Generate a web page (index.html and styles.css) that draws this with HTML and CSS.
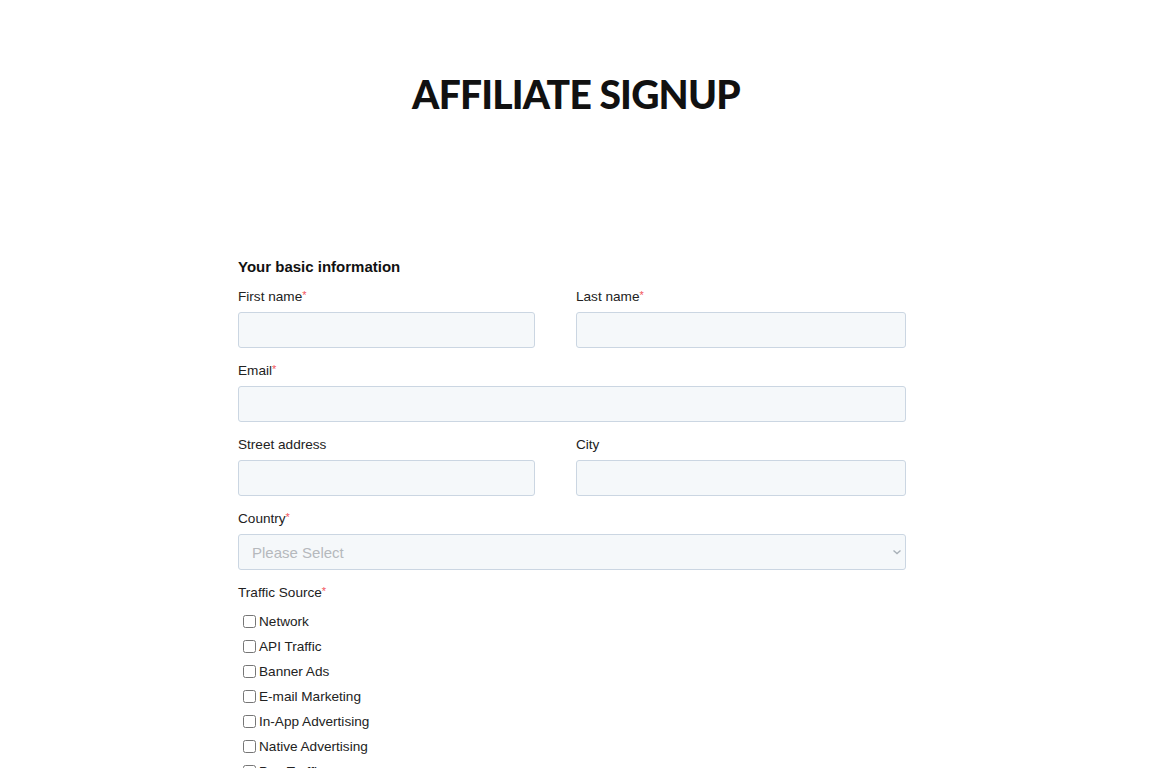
FILE: index.html
```html
<!DOCTYPE html>
<html>
<head>
<meta charset="utf-8">
<link rel="stylesheet" href="styles.css">
</head>
<body>
<header class="hero">
  <h1 class="title">AFFILIATE SIGNUP</h1>
</header>
<main class="wrap">
  <form class="form">
    <h3 class="section">Your basic information</h3>
    <div class="row two">
      <div class="field">
        <label class="lbl">First name<span class="req">*</span></label>
        <input class="inp" type="text">
      </div>
      <div class="field">
        <label class="lbl">Last name<span class="req">*</span></label>
        <input class="inp" type="text">
      </div>
    </div>
    <div class="row">
      <div class="field">
        <label class="lbl">Email<span class="req">*</span></label>
        <input class="inp" type="email">
      </div>
    </div>
    <div class="row two">
      <div class="field">
        <label class="lbl">Street address</label>
        <input class="inp" type="text">
      </div>
      <div class="field">
        <label class="lbl">City</label>
        <input class="inp" type="text">
      </div>
    </div>
    <div class="row">
      <div class="field">
        <label class="lbl">Country<span class="req">*</span></label>
        <select class="inp sel"><option>Please Select</option></select>
      </div>
    </div>
    <div class="row">
      <div class="field">
        <label class="lbl">Traffic Source<span class="req">*</span></label>
        <ul class="checks">
          <li><label class="chk"><input type="checkbox"><span>Network</span></label></li>
          <li><label class="chk"><input type="checkbox"><span>API Traffic</span></label></li>
          <li><label class="chk"><input type="checkbox"><span>Banner Ads</span></label></li>
          <li><label class="chk"><input type="checkbox"><span>E-mail Marketing</span></label></li>
          <li><label class="chk"><input type="checkbox"><span>In-App Advertising</span></label></li>
          <li><label class="chk"><input type="checkbox"><span>Native Advertising</span></label></li>
          <li><label class="chk"><input type="checkbox"><span>Pop Traffic</span></label></li>
        </ul>
      </div>
    </div>
  </form>
</main>
</body>
</html>
```

FILE: styles.css
```css
html, body { margin: 0; padding: 0; background: #fff; }
body { font-family: "Liberation Sans", Arial, sans-serif; color: #222; }

.hero { padding-top: 68px; height: 188px; box-sizing: border-box; }
.title {
  margin: 0;
  text-align: center;
  font-family: Lato, "Liberation Sans", sans-serif;
  font-weight: 900;
  font-size: 39px;
  line-height: 52px;
  letter-spacing: -0.8px;
  color: #111;
}

.wrap { width: 676px; margin: 0 auto; padding-top: 70px; }
.form { width: 668px; }

.section { margin: 0 0 12px; font-size: 15px; line-height: 18px; font-weight: 700; color: #111; }

.row { margin-bottom: 14px; }
.row.two { display: grid; grid-template-columns: 297px 330px; column-gap: 41px; }
.field { display: flex; flex-direction: column; }

.lbl { font-size: 13.6px; line-height: 18px; margin-bottom: 6px; color: #222; }
.req { color: #f2545b; font-size: 11px; vertical-align: top; line-height: 14px; }

.inp {
  box-sizing: border-box;
  height: 36px;
  width: 100%;
  background: #f5f8fa;
  border: 1px solid #cbd6e2;
  border-radius: 3px;
  font-family: inherit;
  font-size: 15px;
  padding: 0 13px;
  margin: 0;
}
.sel { color: #b5b9bd; appearance: none; -webkit-appearance: none;
  background-image: url("data:image/svg+xml,%3Csvg xmlns='http://www.w3.org/2000/svg' width='10' height='6' viewBox='0 0 10 6'%3E%3Cpath d='M1.5 1.5 L5 4.5 L8.5 1.5' fill='none' stroke='%23a8b0b8' stroke-width='1.4'/%3E%3C/svg%3E");
  background-repeat: no-repeat; background-position: right 3px center; }

.checks { list-style: none; margin: 4px 0 0; padding: 0; }
.checks li { height: 25px; }
.chk { display: flex; align-items: center; font-size: 13.6px; color: #222; height: 18px; }
.chk input { width: 13px; height: 13px; margin: 0 3px 0 5px; }
```
